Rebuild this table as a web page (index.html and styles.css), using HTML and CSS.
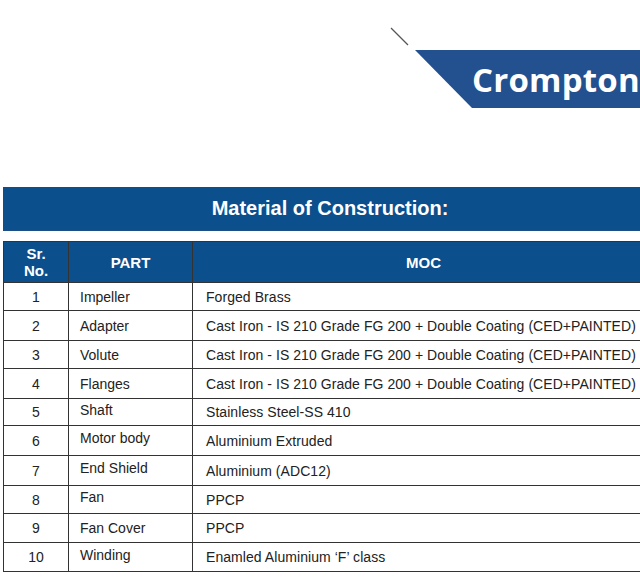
FILE: index.html
```html
<!DOCTYPE html>
<html>
<head>
<meta charset="utf-8">
<link rel="stylesheet" href="styles.css">
</head>
<body>
<header class="top">
  <div class="logo">
    <svg class="slash" width="20" height="20" viewBox="0 0 20 20"><line x1="1" y1="1" x2="18" y2="18" stroke="#555" stroke-width="1.2"/></svg>
    <div class="banner"><span class="brand">Crompton</span></div>
  </div>
</header>
<div class="title">Material of Construction:</div>
<div class="tablewrap">
<table class="moc">
  <thead>
    <tr><th class="c1">Sr.<br>No.</th><th class="c2">PART</th><th class="c3">MOC</th></tr>
  </thead>
  <tbody>
    <tr class="h28"><td class="n">1</td><td class="p">Impeller</td><td class="m">Forged Brass</td></tr>
    <tr class="h30"><td class="n">2</td><td class="p">Adapter</td><td class="m">Cast Iron - IS 210 Grade FG 200 + Double Coating (CED+PAINTED)</td></tr>
    <tr class="h28"><td class="n">3</td><td class="p">Volute</td><td class="m">Cast Iron - IS 210 Grade FG 200 + Double Coating (CED+PAINTED)</td></tr>
    <tr class="h30"><td class="n">4</td><td class="p">Flanges</td><td class="m">Cast Iron - IS 210 Grade FG 200 + Double Coating (CED+PAINTED)</td></tr>
    <tr class="h27"><td class="n">5</td><td class="p up">Shaft</td><td class="m">Stainless Steel-SS 410</td></tr>
    <tr class="h30"><td class="n">6</td><td class="p up">Motor body</td><td class="m">Aluminium Extruded</td></tr>
    <tr class="h30"><td class="n">7</td><td class="p up">End Shield</td><td class="m">Aluminium (ADC12)</td></tr>
    <tr class="h28"><td class="n">8</td><td class="p up">Fan</td><td class="m">PPCP</td></tr>
    <tr class="h29"><td class="n">9</td><td class="p">Fan Cover</td><td class="m">PPCP</td></tr>
    <tr class="h29"><td class="n">10</td><td class="p up">Winding</td><td class="m">Enamled Aluminium ‘F’ class</td></tr>
  </tbody>
</table>
</div>
</body>
</html>
```
FILE: styles.css
```css
html, body {
  margin: 0;
  padding: 0;
  background: #ffffff;
  width: 640px;
  height: 578px;
  overflow: hidden;
  font-family: "Liberation Sans", Arial, sans-serif;
}
.top {
  height: 187px;
  display: flex;
  justify-content: flex-end;
}
.logo {
  display: flex;
  padding-top: 27px;
}
.slash {
  display: block;
  margin-right: 5px;
}
.banner {
  margin-top: 23px;
  width: 225px;
  height: 58px;
  background: #23508f;
  clip-path: polygon(0 0, 100% 0, 100% 100%, 57px 100%);
  display: flex;
  align-items: center;
  padding-left: 57px;
  box-sizing: border-box;
  overflow: hidden;
}
.brand {
  font-family: "Open Sans", sans-serif;
  font-weight: 700;
  font-size: 33px;
  color: #ffffff;
  white-space: nowrap;
  letter-spacing: 0.2px;
  margin-top: 1px;
}
.title {
  margin-left: 3px;
  height: 44px;
  background: #0b4f8d;
  color: #ffffff;
  font-weight: 700;
  font-size: 20px;
  display: flex;
  align-items: center;
  justify-content: center;
  padding-left: 17px;
  box-sizing: border-box;
  border-bottom: 1px solid #1c4f85;
}
.tablewrap {
  width: 640px;
  overflow: hidden;
  margin-top: 10px;
}
.moc {
  margin-left: 3px;
  width: 652px;
  border-collapse: collapse;
  table-layout: fixed;
  font-size: 14px;
  color: #222;
}
.moc th, .moc td {
  border: 1.5px solid #333;
  padding: 0;
  line-height: 16px;
}
.moc th {
  background: #0b4f8d;
  color: #ffffff;
  font-weight: 700;
  font-size: 15px;
  height: 40px;
  line-height: 17px;
  text-align: center;
}
.c1 { width: 64px; }
.c2 { width: 123px; }
.h27 { height: 27px; }
.h28 { height: 28px; }
.h29 { height: 29px; }
.h30 { height: 30px; }
.n { text-align: center; }
.moc td.p { padding-left: 11px; }
.moc td.up { padding-bottom: 5px; }
.moc td.m { padding-left: 13px; white-space: nowrap; overflow: hidden; letter-spacing: 0.06px; }
```
